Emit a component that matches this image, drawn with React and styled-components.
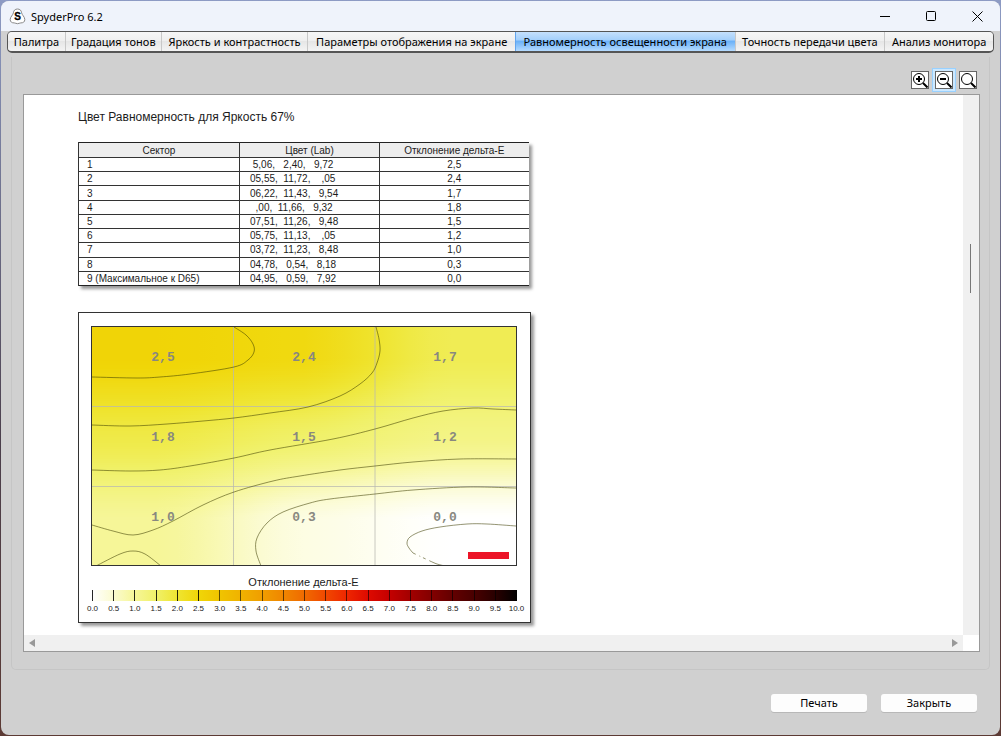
import React from "react";
import styled, { createGlobalStyle } from "styled-components";

const GlobalStyle = createGlobalStyle`
  * {
    box-sizing: border-box;
  }

  body {
    margin: 0;
    padding: 1px;
    background: linear-gradient(#8d9bc4, #4b3f4c 60%, #5c3a34);
    background-attachment: fixed;
    color: #000;
    font-family: "Noto Sans", "Open Sans", sans-serif;
    font-size: 11px;
  }
`;

const Window = styled.div`
  display: flex;
  flex-direction: column;
  min-height: calc(100vh - 2px);
  overflow: hidden;
  border-radius: 8px;
  background: #d0d0d0;
`;

const TitleBar = styled.header`
  display: flex;
  align-items: center;
  height: 30px;
  padding-left: 8px;
  background: #eff3fb;
`;

const WindowTitle = styled.h1`
  flex: 1;
  margin: 0 0 0 5px;
  font-size: 11px;
  font-weight: 400;
`;

const CaptionButton = styled.button`
  display: flex;
  align-items: center;
  justify-content: center;
  width: 46px;
  height: 28px;
  padding: 0;
  border: 0;
  background: none;
`;

const Tabs = styled.nav`
  display: grid;
  grid-template-columns: 57fr 96fr 147fr 208fr 220fr 150fr 109fr;
  height: 22px;
  margin: 0 6px;
  border: 1px solid #555;
  border-bottom-width: 2px;
  border-radius: 5px;
  overflow: hidden;
`;

const Tab = styled.button`
  min-width: 0;
  padding: 0;
  border: 0;
  border-left: 1px solid ${({ $active }) => ($active ? "#62a5ee" : "#c8c8c8")};
  background: ${({ $active }) =>
    $active
      ? "linear-gradient(#c5e0fc, #a5d0fb 40%, #6cb2f8 50%, #b5dbff)"
      : "linear-gradient(#f6f6f6, #efefef 45%, #e6e6e6 50%, #f4f4f4)"};
  color: #000;
  font: inherit;
  line-height: 18px;
  white-space: nowrap;

  &:first-child {
    border-left: 0;
  }
`;

const Panel = styled.main`
  display: flex;
  flex: 1;
  flex-direction: column;
  margin: 4px 10px 0;
  padding: 0 9px 17px 11px;
  border: 1px solid #c5c5c5;
  border-top: 0;
  border-radius: 0 0 5px 5px;
`;

const Toolbar = styled.div`
  display: flex;
  justify-content: flex-end;
  gap: 6px;
  padding: 14px 3px 5px;
`;

const ToolButton = styled.button`
  width: 18px;
  height: 18px;
  padding: 0;
  border: 1px solid #666;
  background: #fff;
  line-height: 0;
  box-shadow: ${({ $focused }) =>
    $focused ? "0 0 0 2px #cce8ff, 0 0 0 3px #99d1ff" : "none"};
`;

const Viewer = styled.section`
  display: grid;
  flex: 1;
  grid-template-columns: 1fr 16px;
  grid-template-rows: 1fr 16px;
  border: 1px solid #999;
  background: #fff;
`;

const Page = styled.article`
  min-width: 0;
  padding: 14px 54px 10px;
  color: #1c1c1c;
  font-family: "Liberation Sans", Arial, sans-serif;
`;

const PageTitle = styled.h2`
  margin: 0 0 17px;
  font-size: 12px;
  font-weight: 400;
  line-height: 16px;
`;

const VerticalTrack = styled.div`
  display: flex;
  justify-content: center;
  padding: 149px 2px 0 0;
  background: #f0f0f0;
`;

const VerticalThumb = styled.div`
  width: 1px;
  height: 49px;
  background: #777;
`;

const HorizontalTrack = styled.div`
  display: flex;
  align-items: center;
  justify-content: space-between;
  padding: 0 4px;
  background: #f0f0f0;
`;

const Table = styled.table`
  width: 450px;
  height: 144px;
  margin-bottom: 26px;
  border-collapse: collapse;
  border-top: 1px solid #222;
  border-bottom: 1px solid #222;
  border-left: 1px solid #222;
  box-shadow: 3px 3px 3px #999;
  table-layout: fixed;
  font-size: 10px;
  line-height: 12px;
`;

const HeadCell = styled.th`
  width: ${({ $width }) => $width};
  padding: 2px 0 0;
  border-left: 1px solid #333;
  background: #ededed;
  font-weight: 400;
`;

const Cell = styled.td`
  padding: 1px 8px 0;
  border-top: 1px solid #333;
  border-left: 1px solid #333;
  text-align: ${({ $align }) => $align || "left"};
`;

const LabCell = styled(Cell)`
  padding-left: 10px;
  white-space: pre;
`;

const Figure = styled.figure`
  width: 453px;
  margin: 0;
  padding: 13px 6px 8px 4px;
  border: 1px solid #333;
  background: #fff;
  box-shadow: 3px 3px 3px #999;
  line-height: 0;
`;

const Plot = styled.svg`
  display: block;
  margin: 0 auto;
`;

const Caption = styled.figcaption`
  padding: 9px 0 1px;
  font-size: 11px;
  line-height: 14px;
  text-align: center;
`;

const Footer = styled.footer`
  display: flex;
  justify-content: flex-end;
  gap: 14px;
  padding: 24px 23px 23px;
`;

const PushButton = styled.button`
  width: 96px;
  height: 18px;
  padding: 0;
  border: 0;
  border-radius: 3px;
  background: #fdfdfd;
  box-shadow: 0 1px 0 #b8b8b8;
  color: #000;
  font: inherit;
  line-height: 18px;
`;

const tabs = [
  "Палитра",
  "Градация тонов",
  "Яркость и контрастность",
  "Параметры отображения на экране",
  "Равномерность освещенности экрана",
  "Точность передачи цвета",
  "Анализ монитора",
];

const rows = [
  ["1", " 5,06,   2,40,   9,72", "2,5"],
  ["2", "05,55,  11,72,    ,05", "2,4"],
  ["3", "06,22,  11,43,   9,54", "1,7"],
  ["4", "  ,00,  11,66,   9,32", "1,8"],
  ["5", "07,51,  11,26,   9,48", "1,5"],
  ["6", "05,75,  11,13,    ,05", "1,2"],
  ["7", "03,72,  11,23,   8,48", "1,0"],
  ["8", "04,78,   0,54,   8,18", "0,3"],
  ["9 (Максимальное к D65)", "04,95,   0,59,   7,92", "0,0"],
];

// One colour for every 0.5 of delta-E, from 0 to 10
const scale = [
  [255, 255, 255],
  [251, 251, 208],
  [246, 246, 152],
  [240, 241, 106],
  [239, 229, 50],
  [240, 214, 8],
  [240, 196, 0],
  [240, 178, 0],
  [240, 158, 0],
  [240, 134, 0],
  [240, 106, 0],
  [240, 72, 0],
  [238, 38, 0],
  [222, 10, 0],
  [196, 0, 0],
  [162, 0, 0],
  [130, 0, 0],
  [98, 0, 0],
  [72, 0, 0],
  [40, 0, 0],
  [0, 0, 0],
];

const sectors = [
  [2.55, 2.4, 1.7],
  [1.8, 1.5, 1.2],
  [1, 0.3, 0],
];

const WIDTH = 424;
const HEIGHT = 239;
const columnX = [71, 212, 353];
const rowY = [31, 111, 191];

const colorAt = (value) => {
  const position = Math.max(0, value) * 2;
  const index = Math.min(Math.floor(position), scale.length - 2);
  const t = position - index;
  const mixed = scale[index].map((c, i) =>
    Math.round(c + (scale[index + 1][i] - c) * t)
  );
  return `rgb(${mixed.join(",")})`;
};

const interpolate = (stops, values, at) => {
  const i = at < stops[1] ? 0 : 1;
  const t = Math.min(1, Math.max(0, (at - stops[i]) / (stops[i + 1] - stops[i])));
  const eased = (t + t * t * (3 - 2 * t)) / 2;
  return values[i] + (values[i + 1] - values[i]) * eased;
};

const valueAt = (x, y) =>
  interpolate(
    rowY,
    sectors.map((line) => interpolate(columnX, line, x)),
    y
  );

const contours = [
  [[142, 0], [154, 8], [161, 17], [162, 25], [156, 33], [142, 40], [98, 47], [68, 50], [45, 51], [0, 50]],
  [[0, 98], [38, 99], [75, 97], [111, 94], [142, 91], [178, 86], [216, 80], [248, 69], [268, 57], [280, 46], [285, 36], [288, 24], [287, 12], [284, 0]],
  [[0, 143], [38, 144], [68, 143], [98, 139], [142, 131], [178, 123], [241, 112], [283, 102], [321, 91], [351, 84], [381, 81], [401, 82], [424, 83]],
  [[0, 198], [21, 204], [41, 208], [61, 203], [81, 194], [111, 178], [142, 165], [181, 154], [208, 149], [248, 143], [283, 139], [321, 135], [368, 132], [424, 132]],
  [[4, 239], [28, 227], [41, 224], [53, 227], [69, 239]],
  [[169, 239], [164, 224], [165, 211], [175, 196], [191, 185], [218, 176], [238, 172], [283, 167], [321, 163], [375, 160], [424, 161]],
  [[424, 199], [395, 197], [375, 197], [348, 200], [330, 204], [318, 210], [315, 216], [317, 221], [321, 226]],
  [[338, 234], [345, 237], [353, 239]],
];

const smoothPath = (points) =>
  points.reduce((path, p, i) => {
    if (i === 0) return `M${p[0]} ${p[1]}`;
    const a = points[i - 1];
    const before = points[i - 2] || a;
    const after = points[i + 1] || p;
    const c1 = [a[0] + (p[0] - before[0]) / 6, a[1] + (p[1] - before[1]) / 6];
    const c2 = [p[0] - (after[0] - a[0]) / 6, p[1] - (after[1] - a[1]) / 6];
    return `${path} C${c1.join(" ")} ${c2.join(" ")} ${p.join(" ")}`;
  }, "");

const strips = Array.from({ length: 120 }, (_, i) => i * 2);
const samples = Array.from({ length: 21 }, (_, i) => i / 20);

const HeatMap = () => (
  <Plot width="426" height="240" viewBox="-1 -1 426 240">
    <defs>
      {strips.map((y) => (
        <linearGradient key={y} id={`strip-${y}`}>
          {samples.map((s) => (
            <stop key={s} offset={s} stopColor={colorAt(valueAt(s * WIDTH, y))} />
          ))}
        </linearGradient>
      ))}
    </defs>
    {strips.map((y) => (
      <rect key={y} y={y} width={WIDTH} height="2" fill={`url(#strip-${y})`} />
    ))}
    <path
      d={`M141.5 0V${HEIGHT}M283 0V${HEIGHT}M0 79.5H${WIDTH}M0 159.5H${WIDTH}`}
      stroke="#b8b8b0"
      strokeOpacity="0.75"
    />
    {sectors.map((line, r) =>
      line.map((value, c) => (
        <text
          key={`${r}-${c}`}
          x={columnX[c]}
          y={rowY[r] + 3}
          textAnchor="middle"
          fill="#888880"
          fontFamily="Liberation Mono, monospace"
          fontWeight="700"
          fontSize="13"
        >
          {rows[r * 3 + c][2]}
        </text>
      ))
    )}
    <g fill="none" stroke="#3c3c00" strokeOpacity="0.55">
      {contours.map((points, i) => (
        <path key={i} d={smoothPath(points)} />
      ))}
      <path d="M321 226L338 234" strokeDasharray="3 4 1 3" />
    </g>
    <rect x="376" y="225" width="41" height="7" fill="#ec1528" />
    <rect x="-0.5" y="-0.5" width="425" height="239" fill="none" stroke="#333" />
  </Plot>
);

const ColorScale = () => (
  <Plot width="442" height="24" viewBox="-9 0 442 24">
    <defs>
      <linearGradient id="delta-e">
        {scale.map((c, i) => (
          <stop key={i} offset={i / 20} stopColor={`rgb(${c.join(",")})`} />
        ))}
      </linearGradient>
    </defs>
    <rect width="425" height="11" fill="url(#delta-e)" />
    {scale.map((_, i) => (
      <g key={i}>
        <rect
          x={Math.round(i * 21.2)}
          width="1"
          height="11"
          fill="#000"
          fillOpacity={i > 5 ? 0.6 : 0.85}
        />
        <text
          x={i * 21.2 + 0.5}
          y="21"
          textAnchor="middle"
          fill="#222"
          fontFamily="Liberation Sans, Arial, sans-serif"
          fontSize="8"
        >
          {(i / 2).toFixed(1)}
        </text>
      </g>
    ))}
  </Plot>
);

const Logo = () => (
  <svg width="17" height="17" viewBox="0 0 17 17" aria-hidden="true">
    <path
      d="M8.5 1C6 1 4.6 2.6 4.4 4.8C4.2 6.8 1.2 8.8 1.2 11.5C1.2 14 3 15 5.2 14.9C6.5 14.9 7.3 15.7 8.5 15.7S10.5 14.9 11.8 14.9C14 15 15.8 14 15.8 11.5C15.8 8.8 12.8 6.8 12.6 4.8C12.4 2.6 11 1 8.5 1Z"
      fill="#fff"
      stroke="#888"
    />
    <text
      x="8.5"
      y="12"
      textAnchor="middle"
      fontFamily="Liberation Sans, Arial, sans-serif"
      fontSize="10"
      fontWeight="700"
      stroke="#000"
      strokeWidth="0.3"
    >
      S
    </text>
  </svg>
);

const Magnifier = ({ sign }) => (
  <svg width="16" height="16" viewBox="0 0 16 16" aria-hidden="true">
    <circle cx="7" cy="7" r="5.5" fill="#fff" stroke="#000" />
    <path d="M11 11L15.5 15.5" stroke="#000" strokeWidth="2" />
    {sign && (
      <path d={`M4 7H10${sign === "+" ? "M7 4V10" : ""}`} stroke="#000" strokeWidth="2" />
    )}
  </svg>
);

const Arrow = ({ right }) => (
  <svg width="9" height="10" viewBox="0 0 9 10" aria-hidden="true">
    <path d={right ? "M2 1V9L8 5Z" : "M7 1V9L1 5Z"} fill="#999" />
  </svg>
);

const App = () => (
  <>
    <GlobalStyle />
    <Window>
      <TitleBar>
        <Logo />
        <WindowTitle>SpyderPro 6.2</WindowTitle>
        <CaptionButton aria-label="Свернуть">
          <svg width="11" height="11" viewBox="0 0 11 11">
            <path d="M0 5.5H10" stroke="#000" />
          </svg>
        </CaptionButton>
        <CaptionButton aria-label="Развернуть">
          <svg width="11" height="11" viewBox="0 0 11 11">
            <rect x="0.5" y="0.5" width="9" height="9" rx="1" fill="none" stroke="#000" />
          </svg>
        </CaptionButton>
        <CaptionButton aria-label="Закрыть окно">
          <svg width="11" height="11" viewBox="0 0 11 11">
            <path d="M0.5 0.5L10.5 10.5M10.5 0.5L0.5 10.5" stroke="#000" />
          </svg>
        </CaptionButton>
      </TitleBar>

      <Tabs>
        {tabs.map((name, i) => (
          <Tab key={name} $active={i === 4}>
            {name}
          </Tab>
        ))}
      </Tabs>

      <Panel>
        <Toolbar>
          <ToolButton aria-label="Увеличить">
            <Magnifier sign="+" />
          </ToolButton>
          <ToolButton aria-label="Уменьшить" $focused>
            <Magnifier sign="-" />
          </ToolButton>
          <ToolButton aria-label="По размеру">
            <Magnifier />
          </ToolButton>
        </Toolbar>

        <Viewer>
          <Page>
            <PageTitle>Цвет Равномерность для Яркость 67%</PageTitle>
            <Table>
              <thead>
                <tr>
                  <HeadCell $width="161px">Сектор</HeadCell>
                  <HeadCell $width="140px">Цвет (Lab)</HeadCell>
                  <HeadCell $width="149px">Отклонение дельта-E</HeadCell>
                </tr>
              </thead>
              <tbody>
                {rows.map(([sector, lab, delta]) => (
                  <tr key={sector}>
                    <Cell>{sector}</Cell>
                    <LabCell>{lab}</LabCell>
                    <Cell $align="center">{delta}</Cell>
                  </tr>
                ))}
              </tbody>
            </Table>
            <Figure>
              <HeatMap />
              <Caption>Отклонение дельта-E</Caption>
              <ColorScale />
            </Figure>
          </Page>
          <VerticalTrack>
            <VerticalThumb />
          </VerticalTrack>
          <HorizontalTrack>
            <Arrow />
            <Arrow right />
          </HorizontalTrack>
        </Viewer>
      </Panel>

      <Footer>
        <PushButton>Печать</PushButton>
        <PushButton>Закрыть</PushButton>
      </Footer>
    </Window>
  </>
);

export default App;
